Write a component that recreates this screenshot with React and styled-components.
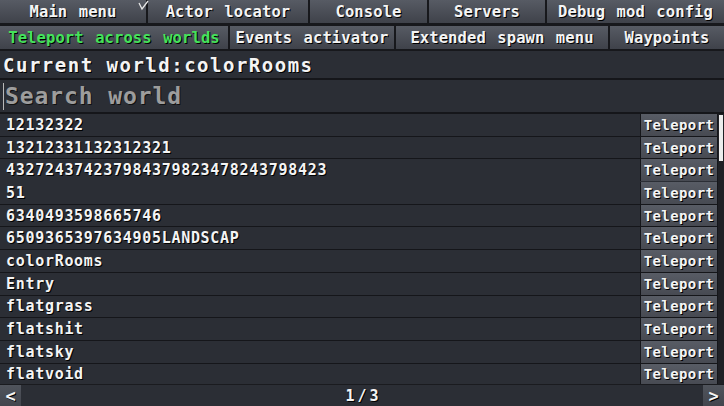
import React from "react";
import styled, { createGlobalStyle } from "styled-components";

const GlobalStyle = createGlobalStyle`
  *, *::before, *::after { box-sizing: border-box; }
  html, body { margin: 0; padding: 0; background: #2b2e35; overflow: hidden; }
  #root { width: 724px; height: 406px; }
`;

const FONT = `"DejaVu Sans Mono", "Liberation Mono", monospace`;

const Root = styled.div`
  position: relative;
  width: 724px;
  height: 406px;
  display: flex;
  flex-direction: column;
  background: #2b2e35;
  font-family: ${FONT};
  font-weight: bold;
  color: #f4f4f4;
  text-shadow: 1px 1px 0 #000;
  overflow: hidden;
`;

const TabRow = styled.div`
  display: flex;
  gap: 2px;
  height: ${(p) => p.$h}px;
  background: #17181c;
  padding-bottom: ${(p) => p.$pb}px;
  flex-shrink: 0;
`;

const Tab = styled.div`
  width: ${(p) => p.$w}px;
  flex: ${(p) => (p.$grow ? "1 1 auto" : "0 0 auto")};
  display: flex;
  align-items: center;
  justify-content: center;
  background: linear-gradient(#575b64, #3f424a);
  font-size: 15.5px;
  letter-spacing: 0.1px;
  word-spacing: 2px;
  white-space: nowrap;
  color: ${(p) => (p.$active ? "#44e25c" : "#f4f4f4")};
`;

const Header = styled.div`
  height: 29px;
  display: flex;
  align-items: center;
  padding-left: 3px;
  font-size: 19px;
  letter-spacing: 1.5px;
  border-bottom: 2px solid #15161a;
  flex-shrink: 0;
`;

const SearchBox = styled.div`
  height: 34px;
  display: flex;
  align-items: center;
  padding-left: 3px;
  border-bottom: 2px solid #15161a;
  flex-shrink: 0;
`;

const Caret = styled.div`
  width: 1px;
  height: 27px;
  background: #b8b8b8;
  margin-right: 1px;
`;

const SearchText = styled.span`
  font-size: 23px;
  letter-spacing: 0.9px;
  color: #9d9d9d;
  text-shadow: 1px 1px 0 #111;
`;

const ListArea = styled.div`
  height: 270px;
  display: flex;
  overflow: hidden;
  flex-shrink: 0;
`;

const Rows = styled.div`
  width: 717px;
  display: flex;
  flex-direction: column;
`;

const Row = styled.div`
  height: 22.7px;
  flex-shrink: 0;
  display: flex;
  border-bottom: 1px solid ${(p) => (p.$noLine ? "transparent" : "#15161a")};
`;

const Name = styled.div`
  flex: 1;
  display: flex;
  align-items: center;
  padding-left: 6px;
  font-size: 15px;
  letter-spacing: 0.7px;
`;

const TeleportBtn = styled.div`
  width: 77px;
  border-left: 1px solid #15161a;
  display: flex;
  align-items: center;
  justify-content: center;
  background: linear-gradient(#585c65, #474a52);
  font-size: 14px;
  letter-spacing: 0.4px;
`;

const Scrollbar = styled.div`
  width: 7px;
  background: #1f2025;
  border-left: 1px solid #15161a;
  padding: 1px 1px 0 1px;
`;

const Thumb = styled.div`
  height: 46px;
  background: #ececec;
  width: 4px;
`;

const Bottom = styled.div`
  flex: 1;
  display: flex;
  align-items: stretch;
  justify-content: space-between;
  border-top: 1px solid #1a1b1f;
`;

const PageBtn = styled.div`
  width: 21px;
  display: flex;
  align-items: center;
  justify-content: center;
  background: linear-gradient(#50545c, #42454d);
  font-size: 17px;
`;

const PageLabel = styled.div`
  display: flex;
  align-items: center;
  font-size: 15px;
  letter-spacing: 3px;
  margin-left: 3px;
`;

const Cursor = styled.svg`
  position: absolute;
  left: 136px;
  top: 0;
`;

const rows = [
  ["12132322"],
  ["13212331132312321"],
  ["432724374237984379823478243798423", true],
  ["51"],
  ["6340493598665746"],
  ["6509365397634905LANDSCAP"],
  ["colorRooms"],
  ["Entry"],
  ["flatgrass"],
  ["flatshit"],
  ["flatsky"],
  ["flatvoid"],
];

export default function App() {
  return (
    <Root>
      <GlobalStyle />
      <TabRow $h={26} $pb={3}>
        <Tab $w={146}>Main menu</Tab>
        <Tab $w={160}>Actor locator</Tab>
        <Tab $w={117}>Console</Tab>
        <Tab $w={116}>Servers</Tab>
        <Tab $grow>Debug mod config</Tab>
      </TabRow>
      <TabRow $h={25} $pb={2}>
        <Tab $w={228} $active>Teleport across worlds</Tab>
        <Tab $w={164}>Events activator</Tab>
        <Tab $w={212}>Extended spawn menu</Tab>
        <Tab $grow>Waypoints</Tab>
      </TabRow>
      <Header>Current world:colorRooms</Header>
      <SearchBox>
        <Caret />
        <SearchText>Search world</SearchText>
      </SearchBox>
      <ListArea>
        <Rows>
          {rows.map(([n, noLine]) => (
            <Row key={n} $noLine={noLine}>
              <Name>{n}</Name>
              <TeleportBtn>Teleport</TeleportBtn>
            </Row>
          ))}
        </Rows>
        <Scrollbar>
          <Thumb />
        </Scrollbar>
      </ListArea>
      <Bottom>
        <PageBtn>&lt;</PageBtn>
        <PageLabel>1/3</PageLabel>
        <PageBtn>&gt;</PageBtn>
      </Bottom>
      <Cursor width="16" height="12" viewBox="0 0 16 12">
        <path d="M3 3 L6 9 L12 1" stroke="#e6e6e6" strokeWidth="1.3" fill="none" />
      </Cursor>
    </Root>
  );
}
